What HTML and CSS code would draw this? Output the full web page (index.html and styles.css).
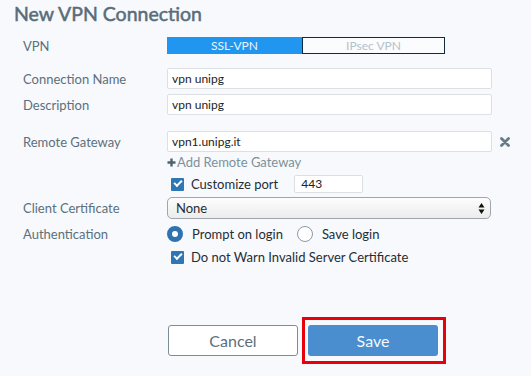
FILE: index.html
```html
<html>
  <head>
    <meta charset="utf-8" />
    <link rel="stylesheet" href="styles.css">
  </head>
  <body>
    <h1 class="title">New VPN Connection</h1>
    <div class="form">
      <div class="row row-vpn">
        <div class="label">VPN</div>
        <div class="toggle">
          <span class="toggle-btn active">SSL-VPN</span>
          <span class="toggle-btn">IPsec VPN</span>
        </div>
      </div>
      <div class="row row-first">
        <div class="label">Connection Name</div>
        <div class="input">vpn unipg</div>
      </div>
      <div class="row row-tight">
        <div class="label">Description</div>
        <div class="input">vpn unipg</div>
      </div>
      <div class="row row-gw">
        <div class="label">Remote Gateway</div>
        <div class="input">vpn1.unipg.it</div>
        <svg class="remove" width="10" height="10" viewBox="0 0 10 10">
          <path d="M1.5 1.5 L8.5 8.5 M8.5 1.5 L1.5 8.5" stroke="#677b87" stroke-width="2.8" stroke-linecap="round" />
        </svg>
      </div>
      <div class="row row-add">
        <div class="label"></div>
        <div class="add-link">
          <svg class="plus" width="9" height="9" viewBox="0 0 9 9">
            <path d="M4.5 0.5 V8.5 M0.5 4.5 H8.5" stroke="#4d6371" stroke-width="2.4" />
          </svg>Add Remote Gateway
        </div>
      </div>
      <div class="row row-port">
        <div class="label"></div>
        <span class="checkbox"></span>
        <span class="check-text">Customize port</span>
        <div class="input port">443</div>
      </div>
      <div class="row row-cert">
        <div class="label">Client Certificate</div>
        <div class="select">
          <span>None</span>
          <svg class="select-arrow" width="7" height="13" viewBox="0 0 7 13">
            <path d="M3.5 1 L6.5 5.5 H0.5 Z M3.5 12 L6.5 7.5 H0.5 Z" fill="#111" />
          </svg>
        </div>
      </div>
      <div class="row row-auth">
        <div class="label">Authentication</div>
        <span class="radio checked"></span>
        <span class="radio-text">Prompt on login</span>
        <span class="radio"></span>
        <span class="radio-text">Save login</span>
      </div>
      <div class="row row-warn">
        <div class="label"></div>
        <span class="checkbox"></span>
        <span class="check-text">Do not Warn Invalid Server Certificate</span>
      </div>
      <div class="row buttons">
        <div class="label"></div>
        <button class="btn btn-cancel">Cancel</button>
        <div class="highlight">
          <button class="btn btn-save">Save</button>
        </div>
      </div>
    </div>
  </body>
</html>
```

FILE: styles.css
```css
body {
  margin: 0;
  background: #f7f9fc;
  font-family: Lato, "Open Sans", sans-serif;
  color: #5b707d;
}
.title {
  margin: 0;
  padding-left: 14px;
  font-size: 19.5px;
  line-height: 28px;
  font-weight: 400;
  color: #586d79;
  -webkit-text-stroke: 0.5px #586d79;
}
.form {
  padding-left: 23px;
}
.row {
  display: flex;
  align-items: center;
  font-size: 13px;
}
.label {
  width: 144px;
  flex: none;
}
.row-vpn {
  margin-top: 9px;
  height: 17px;
}
.row-first {
  margin-top: 14px;
}
.row-tight {
  margin-top: 5px;
}
.row-gw {
  margin-top: 16px;
}
.row-add {
  margin-top: 1px;
  height: 18px;
}
.row-port {
  margin-top: 4px;
  height: 18px;
}
.row-cert {
  margin-top: 4px;
}
.row-auth {
  margin-top: 7px;
  height: 16px;
}
.row-warn {
  margin-top: 7px;
  height: 16px;
}
.buttons {
  margin-top: 52px;
}

.toggle {
  display: flex;
  height: 17px;
}
.toggle-btn {
  width: 141px;
  border: 1px solid #0e2b46;
  background: #fafcfe;
  color: #b3c1ca;
  font-size: 12px;
  line-height: 15px;
  text-align: center;
}
.toggle-btn.active {
  width: 135px;
  border: 0;
  line-height: 17px;
  background: #2196f0;
  color: #e9f4fe;
}

.input {
  box-sizing: border-box;
  width: 325px;
  height: 21px;
  padding-left: 4px;
  background: #fff;
  border: 1px solid #dcdfe3;
  border-radius: 2px;
  color: #222;
  font-size: 12px;
  line-height: 19px;
}
.remove {
  margin-left: 8px;
}
.add-link {
  color: #7d909b;
  font-size: 13px;
}
.plus {
  margin-right: 1px;
}

.checkbox {
  box-sizing: border-box;
  width: 13px;
  height: 13px;
  margin-left: 4px;
  border-radius: 1px;
  background: #2f76b4;
  position: relative;
}
.checkbox::after {
  content: "";
  position: absolute;
  left: 3px;
  top: 2px;
  width: 6px;
  height: 3px;
  border-left: 2px solid #fff;
  border-bottom: 2px solid #fff;
  transform: rotate(-45deg);
}
.check-text {
  margin-left: 7px;
  color: #1f2d36;
}
.port {
  width: 69px;
  height: 18px;
  line-height: 16px;
  margin-left: 16px;
  padding-left: 6px;
}

.select {
  box-sizing: border-box;
  width: 324px;
  height: 22px;
  display: flex;
  align-items: center;
  justify-content: space-between;
  padding: 0 5px 0 8px;
  border: 1px solid #a0a6ab;
  border-radius: 5px;
  background: linear-gradient(#fdfdfd, #ececec);
  color: #1f2d36;
}

.radio {
  box-sizing: border-box;
  width: 16px;
  height: 16px;
  border-radius: 50%;
  border: 1px solid #8d9aa3;
  background: #fff;
}
.radio.checked {
  border: 5px solid #2e72b2;
}
.radio-text {
  margin-left: 9px;
  margin-right: 14px;
  color: #1f2d36;
}

.btn {
  box-sizing: border-box;
  height: 31px;
  font-family: Lato, "Open Sans", sans-serif;
  font-size: 16px;
  border-radius: 3px;
  cursor: pointer;
}
.btn-cancel {
  width: 130px;
  margin-left: 1px;
  background: #fff;
  border: 1px solid #7b8d97;
  color: #5b707d;
}
.highlight {
  margin-left: 4px;
  padding: 5px 5px 5px 3px;
  border: 3px solid #e8000b;
}
.btn-save {
  display: block;
  width: 130px;
  border: 0;
  background: #4a8ed0;
  color: #f4f8fc;
}
```
